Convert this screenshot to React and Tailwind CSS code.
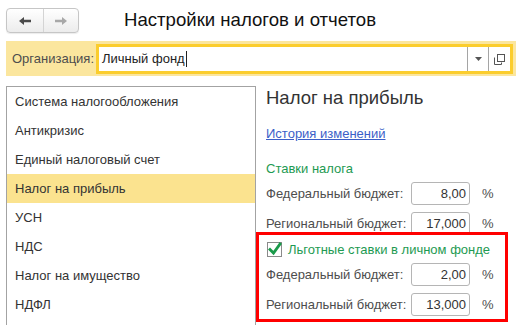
import React from "react";

const items = [
  "Система налогообложения",
  "Антикризис",
  "Единый налоговый счет",
  "Налог на прибыль",
  "УСН",
  "НДС",
  "Налог на имущество",
  "НДФЛ",
];

function RateRow({ label, value }) {
  return (
    <div className="flex items-center h-[23px]">
      <div className="w-[145px] text-[13px] text-[#4d4d4d] leading-[16px]">{label}</div>
      <div className="w-[59px] h-[23px] border border-[#b5b5b5] rounded-[3px] bg-white flex items-center justify-end pr-[3px] text-[13px] text-[#333]">
        {value}
      </div>
      <div className="ml-[12px] text-[13px] text-[#4d4d4d]">%</div>
    </div>
  );
}

export default function App() {
  return (
    <div
      className="w-[516px] h-[325px] bg-white overflow-hidden flex flex-col"
      style={{ fontFamily: '"Liberation Sans", Arial, sans-serif' }}
    >
      {/* header */}
      <div className="h-[41px] flex items-start shrink-0">
        <div className="ml-[6px] mt-[8px] w-[73px] h-[25px] flex rounded-[4px] border border-[#c6c6c6] bg-gradient-to-b from-white to-[#ececec] shadow-[0_1px_1px_rgba(0,0,0,0.08)]">
          <div className="w-[37px] h-full flex items-center justify-center border-r border-[#d4d4d4]">
            <svg width="14" height="10" viewBox="0 0 14 10">
              <path d="M1 5 L6 1 L6 3.8 L13 3.8 L13 6.2 L6 6.2 L6 9 Z" fill="#4a4a4a" />
            </svg>
          </div>
          <div className="flex-1 h-full flex items-center justify-center">
            <svg width="14" height="10" viewBox="0 0 14 10">
              <path d="M13 5 L8 1 L8 3.8 L1 3.8 L1 6.2 L8 6.2 L8 9 Z" fill="#a8a8a8" />
            </svg>
          </div>
        </div>
        <div className="ml-[45px] mt-[9px] text-[18.6px] leading-[22px] text-[#111]">
          Настройки налогов и отчетов
        </div>
      </div>

      {/* organization band */}
      <div className="ml-[6px] h-[35px] bg-[#fbe69e] flex items-start shrink-0">
        <div className="pl-[6px] mt-[10px] text-[13px] leading-[16px] text-[#4d4d4d]">Организация:</div>
        <div className="ml-[2px] mt-[3px] w-[417px] h-[30px] border-[3px] border-[#fbcd2d] bg-white flex items-center">
          <div className="flex-1 pl-[3px] flex items-center text-[13px] text-[#222]">
            Личный фонд
            <span className="inline-block w-px h-[16px] bg-[#222] ml-[1px]" />
          </div>
          <div className="w-[21px] h-[24px] border-l border-[#a5a5a5] flex items-center justify-center">
            <svg width="7" height="4" viewBox="0 0 7 4">
              <path d="M0 0 L7 0 L3.5 4 Z" fill="#555" />
            </svg>
          </div>
          <div className="w-[22px] h-[24px] border-l border-[#a5a5a5] flex items-center justify-center">
            <svg width="11" height="11" viewBox="0 0 11 11">
              <rect x="3.5" y="0.5" width="7" height="7" fill="none" stroke="#555" />
              <path d="M0.5 3.5 L0.5 10.5 L7.5 10.5 L7.5 8.5" fill="none" stroke="#555" />
            </svg>
          </div>
        </div>
      </div>

      {/* main */}
      <div className="mt-[10px] flex flex-1 min-h-0">
        <div className="ml-[6px] w-[250px] border border-b-0 border-[#a3a3a3] flex flex-col">
          {items.map((it) => (
            <div
              key={it}
              className={
                "h-[29px] shrink-0 flex items-center pl-[8px] text-[13px] text-[#333] " +
                (it === "Налог на прибыль" ? "bg-[#fbe38f]" : "")
              }
            >
              {it}
            </div>
          ))}
        </div>

        <div className="flex-1 flex flex-col">
          <div className="pl-[10px] mt-[1px] text-[18.5px] leading-[22px] text-[#333]">Налог на прибыль</div>
          <div className="pl-[10px] mt-[17px] text-[13px] leading-[16px]">
            <span className="text-[#3b5fc8] underline">История изменений</span>
          </div>
          <div className="pl-[10px] mt-[19px] text-[13px] leading-[16px] text-[#1e9a52]">Ставки налога</div>
          <div className="pl-[10px] mt-[5px]">
            <RateRow label="Федеральный бюджет:" value="8,00" />
          </div>
          <div className="pl-[10px] mt-[7px]">
            <RateRow label="Региональный бюджет:" value="17,000" />
          </div>

          <div className="relative -mt-[3px] w-[252px] border-[3px] border-[#ff0000] pl-[7px] pt-[7px] pb-[3px]">
            <div className="flex items-center h-[15px]">
              <div className="ml-[1px] w-[15px] h-[15px] border border-[#8a8a8a] bg-white relative">
                <svg className="absolute left-[0px] -top-[1px]" width="14" height="14" viewBox="0 0 14 14">
                  <path d="M2 7.5 L5.5 11 L12 2" fill="none" stroke="#1a9a4a" strokeWidth="2.8" strokeLinecap="square" />
                </svg>
              </div>
              <div className="ml-[6px] text-[13px] text-[#1e9a52]">Льготные ставки в личном фонде</div>
            </div>
            <div className="mt-[6px]">
              <RateRow label="Федеральный бюджет:" value="2,00" />
            </div>
            <div className="mt-[7px]">
              <RateRow label="Региональный бюджет:" value="13,000" />
            </div>
          </div>
        </div>
      </div>
    </div>
  );
}
